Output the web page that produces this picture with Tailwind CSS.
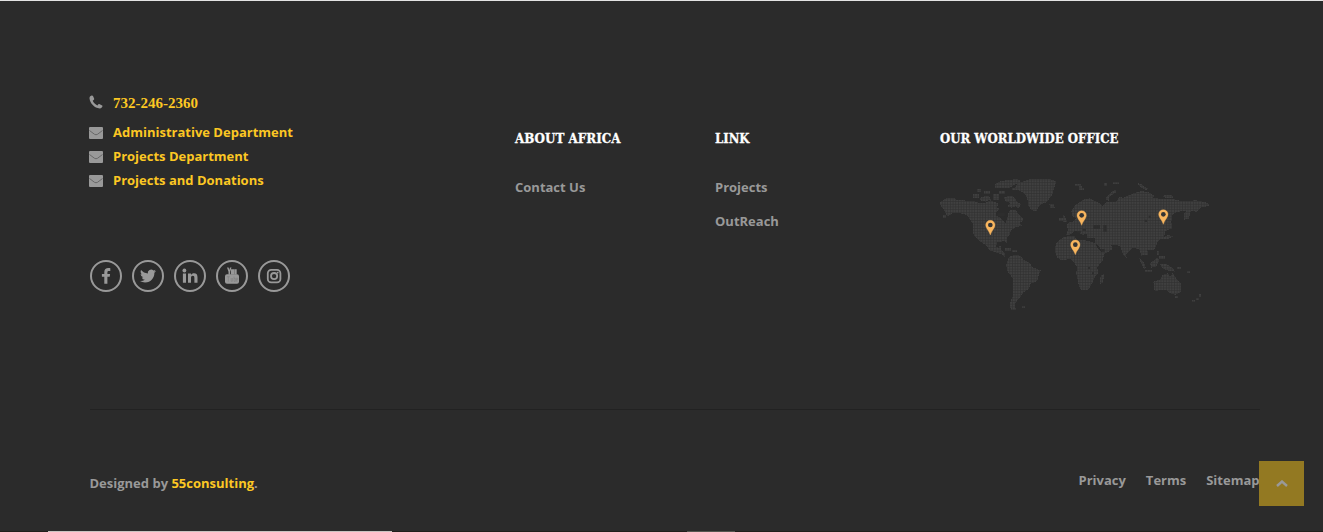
<!DOCTYPE html>
<html lang="en">
<head>
<meta charset="utf-8">
<title>Footer</title>
<script src="https://cdn.jsdelivr.net/npm/@tailwindcss/browser@4"></script>
</head>
<body class="bg-[#2b2b2b]">
<footer class="relative flex h-[532px] w-[1323px] flex-col overflow-hidden border-t border-[#e4e4e4] bg-[#2b2b2b] pl-[89.5px] font-['Open_Sans',sans-serif] text-[13px] font-bold text-[#999999]">
  <div class="flex h-[408px]">
    <section class="w-[425.5px] pt-[90px]">
      <ul class="text-[#fcc723]">
        <li class="flex h-[30px] items-center gap-[10.5px] font-['Liberation_Serif',serif] text-[15px]">
          <svg class="-ml-px mb-[8px] size-[14px] fill-[#999]" viewBox="0 0 14 14"><path d="M2.600.5C1.200 1 .4 2 .5 3.300 1 8.500 5.500 13 10.700 13.500c1.300.1 2.400-.9 2.800-2.200.1-.4-.1-.7-.4-.9L10.300 9c-.3-.2-.7-.1-.9.200l-1 1.200C6.400 9.500 4.600 7.700 3.700 5.700l1.200-1c.3-.2.4-.6.3-.9L4 .9C3.700.5 3.200.3 2.600.5z"/></svg>
          <span class="-mt-[5px]">732-246-2360</span>
        </li>
        <li class="flex h-6 items-center gap-[10.5px]"><svg class="-ml-px h-3 w-[14px]" viewBox="0 0 14 12"><rect width="14" height="12" rx="1" fill="#999"/><path d="M.5 3.500 5.500 7.300Q7 8.200 8.500 7.300L13.500 3.500" fill="none" stroke="#686868"/></svg><span class="-mt-[1px]">Administrative Department</span></li>
        <li class="flex h-6 items-center gap-[10.5px]"><svg class="-ml-px h-3 w-[14px]" viewBox="0 0 14 12"><rect width="14" height="12" rx="1" fill="#999"/><path d="M.5 3.500 5.500 7.300Q7 8.200 8.500 7.300L13.500 3.500" fill="none" stroke="#686868"/></svg><span class="-mt-[1px]">Projects Department</span></li>
        <li class="flex h-6 items-center gap-[10.5px]"><svg class="-ml-px h-3 w-[14px]" viewBox="0 0 14 12"><rect width="14" height="12" rx="1" fill="#999"/><path d="M.5 3.500 5.500 7.300Q7 8.200 8.500 7.300L13.500 3.500" fill="none" stroke="#686868"/></svg><span class="-mt-[1px]">Projects and Donations</span></li>
      </ul>
      <div class="ml-[.5px] mt-[67px] flex gap-[10px]">
        <a class="flex size-8 items-center justify-center rounded-full border-2 border-[#999]"><svg class="size-4 fill-[#999]" viewBox="0 0 16 16"><path d="M12.300.2v2.800h-1.500c-1.100 0-1.400.6-1.400 1.400V6h2.700l-.4 2.800H9.400v7H6.300v-7H3.900V6h2.400V3.900C6.300 1.400 8 .1 10.300.1c1 0 1.800 0 2 .1z"/></svg></a>
        <a class="flex size-8 items-center justify-center rounded-full border-2 border-[#999]"><svg class="size-4 fill-[#999]" viewBox="0 0 24 24"><path d="M23.950 4.570a10 10 0 0 1-2.820.78 4.960 4.960 0 0 0 2.160-2.730 9.900 9.900 0 0 1-3.120 1.190 4.920 4.920 0 0 0-8.390 4.480C7.690 8.100 4.070 6.130 1.640 3.160a4.820 4.820 0 0 0-.67 2.480c0 1.710.87 3.210 2.190 4.100a4.900 4.900 0 0 1-2.230-.62v.06a4.920 4.920 0 0 0 3.950 4.830 5 5 0 0 1-2.210.08 4.940 4.940 0 0 0 4.600 3.420A9.870 9.870 0 0 1 0 19.540a14 14 0 0 0 7.550 2.210c9.050 0 14-7.500 14-13.980v-.64a9.940 9.940 0 0 0 2.400-2.560z"/></svg></a>
        <a class="flex size-8 items-center justify-center rounded-full border-2 border-[#999]"><svg class="size-4 fill-[#999]" viewBox="0 0 16 16"><circle cx="2.400" cy="2.500" r="1.900"/><path d="M.9 5.500h3.100v9.300H.9zM6 5.500h3v1.400c.6-1 1.600-1.700 3-1.700 2.600 0 3.500 1.600 3.500 4.200v5.400h-3.100V9.900c0-1.300-.4-2.200-1.600-2.200S9 8.600 9 9.900v4.900H6z"/></svg></a>
        <a class="flex size-8 items-center justify-center rounded-full border-2 border-[#999]"><svg class="h-[18px] w-4" viewBox="0 0 16 18"><path d="M3 .6h1.600l.7 2.300.7-2.300h1.500L6.100 4.700v3H4.500v-3zM6.900 2.300h3.200v5.200H6.900zM10.300 2.300h2.400v5.200h-2.400z" fill="#999"/><rect x="1" y="7.300" width="14" height="9.500" rx="2" fill="#999"/><path d="M2.800 9.700h3M4.300 9.700v5M7.200 11v3.300h1.200V11M10 9.500v4.900h1.300v-3H10M13.600 14.200h-1.200v-3h1.300v1.500h-1.200" fill="none" stroke="#808080" stroke-width=".6"/></svg></a>
        <a class="flex size-8 items-center justify-center rounded-full border-2 border-[#999]"><svg class="size-4" viewBox="0 0 16 16" fill="none" stroke="#999" stroke-width="1.800"><rect x="1.800" y="1.800" width="12.600" height="12.600" rx="3.400"/><circle cx="8.100" cy="8.100" r="3.100"/><circle cx="11.700" cy="4.600" r=".9" fill="#999" stroke="none"/></svg></a>
      </div>
    </section>
    <section class="w-[200px] pt-[127px]">
      <h4 class="h-5 whitespace-nowrap font-['Roboto_Slab','DejaVu_Serif',serif] text-[13px] leading-5"><svg class="h-5 w-[110px] overflow-visible" fill="#fff" stroke="#fff" stroke-width=".3"><text y="15" textLength="105.500" lengthAdjust="spacingAndGlyphs">ABOUT AFRICA</text></svg></h4>
      <a class="mt-[29px] block leading-5">Contact Us</a>
    </section>
    <section class="w-[225px] pt-[127px]">
      <h4 class="h-5 whitespace-nowrap font-['Roboto_Slab','DejaVu_Serif',serif] text-[13px] leading-5"><svg class="h-5 w-[40px] overflow-visible" fill="#fff" stroke="#fff" stroke-width=".3"><text y="15" textLength="34.500" lengthAdjust="spacingAndGlyphs">LINK</text></svg></h4>
      <a class="mt-[29px] block leading-5">Projects</a>
      <a class="mt-[14px] block leading-5">OutReach</a>
    </section>
    <section class="w-[320px] pt-[127px]">
      <h4 class="h-5 whitespace-nowrap font-['Roboto_Slab','DejaVu_Serif',serif] text-[13px] leading-5"><svg class="h-5 w-[180px] overflow-visible" fill="#fff" stroke="#fff" stroke-width=".3"><text y="15" textLength="178.500" lengthAdjust="spacingAndGlyphs">OUR WORLDWIDE OFFICE</text></svg></h4>
      <svg class="mt-[27px] h-[140px] w-[270px]" viewBox="0 0 810 420">
        <defs>
          <pattern id="dots" width="8.100" height="8.100" patternUnits="userSpaceOnUse"><rect width="8.100" height="8.100" fill="#313131"/><rect width="6" height="6" fill="#404040"/></pattern>
          <g id="pin"><path d="M0 44C-4 31-14 24-14 14A14 14 0 0 1 14 14C14 24 4 31 0 44Z" fill="#f8b55e" stroke="#f8b55e"/><circle cy="14" r="7" fill="#333"/></g>
        </defs>
        <g fill="url(#dots)" shape-rendering="crispEdges">
          <path d="M0 82 18 70 46 70 50 76 98 77 120 84 136 84 150 76 174 84 172 98 180 102 168 112 168 122 180 128 192 138 196 146 202 128 206 112 214 104 228 106 236 118 250 130 250 138 238 144 246 152 224 158 212 168 210 180 200 190 200 204 194 198 172 202 168 216 176 218 178 212 184 212 182 222 194 234 194 246 184 238 168 232 148 226 138 210 124 202 106 186 98 172 98 146 84 124 70 116 40 114 22 124 12 104 2 92Z"/>
          <path d="M98 56h20v12H98zM110 42h14v8h-14zM122 66 146 62 152 74 136 80 120 76ZM132 48h18v10h-18zM158 56h18v18h-18zM164 28 184 18 230 12 244 18 222 30 210 38 164 40ZM178 48h16v8h-16zM190 66 218 62 232 80 242 88 236 100 226 94 214 98 204 94 210 84 198 80ZM216 38h16v7h-16zM8 120h10v8H8z"/>
          <path d="M232 24 270 13 330 12 350 20 342 38 336 62 318 82 300 90 288 110 274 104 264 90 262 70 252 54 236 46 222 46ZM328 88 342 88 344 98 330 98Z"/>
          <path d="M196 220h18v7h-18zM216 224h16v6h-16zM206 246 224 240 242 242 250 254 270 264 276 276 302 286 296 300 292 318 272 326 266 342 250 352 242 364 232 376 224 388 228 404 212 404 210 384 218 364 220 312 204 292 198 272ZM246 394h8v6h-8z"/>
          <path d="M384 164 380 152 388 140 398 142 408 130 398 124 394 108 404 92 430 74 448 70 478 84 488 94 500 82 528 80 538 66 550 68 578 56 604 48 626 52 642 62 638 70 700 72 722 78 770 76 804 84 808 92 782 98 770 110 752 108 746 132 732 134 732 116 738 108 714 110 698 118 694 142 698 160 676 168 672 186 684 180 700 184 684 192 662 192 654 198 648 214 640 226 622 226 626 238 604 242 598 224 580 218 558 240 562 252 550 240 540 212 514 210 516 224 490 238 478 214 464 204 464 190 442 188 440 176 428 180 416 172 404 166 394 178 378 180ZM358 130h10v8h-10zM370 118 378 130 382 140 370 142Z"/>
          <path d="M368 188 392 182 404 184 412 196 430 194 464 204 476 224 492 240 488 256 472 276 474 294 466 304 458 322 446 342 438 346 422 344 416 328 408 292 412 278 402 262 390 252 364 256 350 246 344 226 348 204ZM482 302 494 296 488 324 480 326Z"/>
          <path d="M404 26h20v8h-20zM416 34h10v12h-10zM424 40h8v6h-8zM492 24h10v8h-10zM518 20h18v6h-18zM498 66 516 50 526 44 528 52 508 66 506 78 498 74ZM590 22 604 28 612 36 624 40 620 46 602 38ZM664 62 696 60 700 68 676 68Z"/>
          <path d="M598 250 612 264 618 278 612 282 602 262ZM614 284h22v6h-22zM630 266 650 248 658 256 650 274 634 278ZM650 228h8v12h-8zM658 244h16v8h-16zM660 268 680 268 696 278 706 290 682 286 668 280ZM712 276h12v6h-12zM742 288h8v6h-8z"/>
          <path d="M640 320 660 314 668 300 684 294 690 306 698 294 714 318 724 326 724 350 706 360 688 354 680 344 656 346 644 350ZM706 364h8v6h-8zM776 358h8v8h-8zM768 368h10v7h-10zM756 376h10v6h-10z"/>
        </g>
        <g fill="#2d2d2d"><path d="M412 168h10v6h-10zM428 162h10v5h-10zM460 150h20v12h-20zM490 150h10v20h-10zM626 122h6v6h-6zM614 134h7v7h-7zM482 222h12v8h-12zM444 276h6v6h-6zM456 292h6v6h-6zM172 114h22v10h-22z"/></g>
        <use href="#pin" x="151" y="136"/><use href="#pin" x="425" y="107"/><use href="#pin" x="670" y="104"/><use href="#pin" x="406" y="195"/>
      </svg>
    </section>
  </div>
  <div class="flex h-[123px] w-[1170px] items-start justify-between border-t border-[#222]">
    <p class="pt-[63px] leading-5">Designed by <a class="text-[#fcc723]">55consulting</a>.</p>
    <nav class="flex gap-5 pt-[60px] leading-5"><a>Privacy</a><a>Terms</a><a>Sitemap</a></nav>
  </div>
  <a class="absolute right-[19px] top-[460px] flex size-[45px] items-center justify-center bg-[#937922]"><svg class="h-[7px] w-3" viewBox="0 0 12 7" fill="none" stroke="#999" stroke-width="2.400"><path d="M1 6 6 1.500 11 6"/></svg></a>
  <div class="absolute bottom-0 left-0 flex h-px w-full bg-[#211f1b]"><span class="ml-12 w-[344px] bg-[#c9c3c0]"></span><span class="ml-[295px] w-12 bg-[#55564f]"></span></div>
</footer>
</body>
</html>
